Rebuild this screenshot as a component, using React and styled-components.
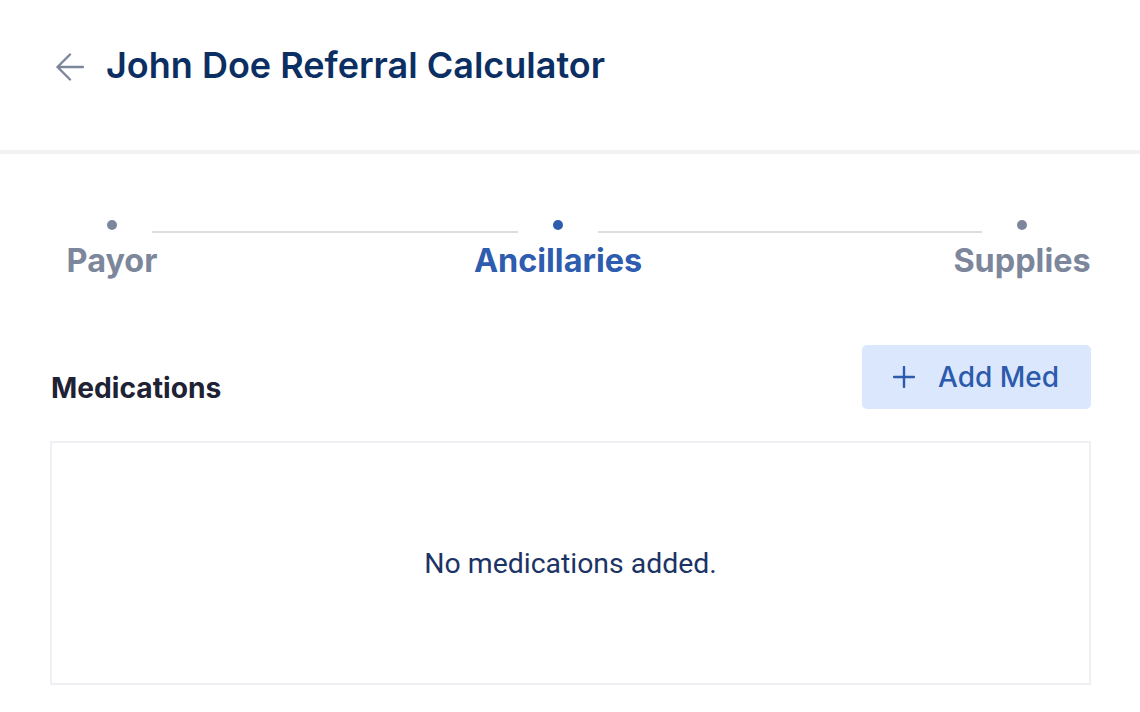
import React from 'react';
import styled, { createGlobalStyle } from 'styled-components';

const GlobalStyle = createGlobalStyle`
	html, body {
		margin: 0;
		padding: 0;
		background: #fff;
		font-family: Inter, "Noto Sans", sans-serif;
	}
	* { box-sizing: border-box; }
`;

const Header = styled.header`
	height: 154px;
	padding: 43px 0 0 56px;
	border-bottom: 4px solid #f2f2f5;
	display: flex;
	align-items: flex-start;
	gap: 22px;
`;

const BackButton = styled.button`
	border: 0;
	background: none;
	padding: 0;
	margin-top: 10px;
	width: 28px;
	height: 28px;
	color: #7d879b;
	cursor: pointer;
	display: flex;
`;

const Title = styled.h1`
	margin: 0;
	font-size: 36px;
	font-weight: 600;
	line-height: 44px;
	color: #0c2f63;
`;

const Main = styled.main`
	padding: 66px 50px 0;
`;

const Track = styled.div`
	display: flex;
	align-items: flex-start;
	padding: 0 63px 0 57px;
`;

const Step = styled.div`
	width: 10px;
	display: flex;
	flex-direction: column;
	align-items: center;
	flex: none;
`;

const Dot = styled.span`
	width: 10px;
	height: 10px;
	border-radius: 50%;
	background: ${p => (p.$active ? '#2e5cae' : '#7d879b')};
`;

const StepLabel = styled.span`
	margin-top: 11px;
	white-space: nowrap;
	font-size: 32.4px;
	font-weight: 700;
	line-height: 39px;
	color: ${p => (p.$active ? '#2e5cae' : '#7d879b')};
`;

const Connector = styled.span`
	flex: ${p => p.$grow} 1 0;
	height: 2px;
	margin: 11px 35px 0;
	background: #dddde0;
`;

const SectionRow = styled.div`
	margin-top: 65px;
	display: flex;
	justify-content: space-between;
	align-items: flex-start;
`;

const SectionTitle = styled.h2`
	margin: 25px 0 0 1px;
	font-size: 28.2px;
	font-weight: 700;
	line-height: 36px;
	color: #1e2234;
`;

const AddButton = styled.button`
	height: 64px;
	width: 229px;
	margin-right: -1px;
	padding: 0 0 0 31px;
	border: 0;
	border-radius: 5px;
	background: #dbe7fd;
	color: #2c5aac;
	display: flex;
	align-items: center;
	gap: 23px;
	font-family: Inter, "Noto Sans", sans-serif;
	font-size: 28px;
	font-weight: 500;
	cursor: pointer;
`;

const EmptyBox = styled.div`
	margin: 32px -1px 0 0;
	height: 244px;
	border: 2px solid #efeff4;
	display: flex;
	align-items: center;
	justify-content: center;
	font-family: Roboto, "Noto Sans", sans-serif;
	font-size: 28.4px;
	color: #1b3365;
`;

const steps = [
	{ label: 'Payor' },
	{ label: 'Ancillaries', active: true },
	{ label: 'Supplies' },
];
const grows = [366, 384];

export default function App() {
	return (
		<>
			<GlobalStyle />
			<Header>
				<BackButton aria-label="Back">
					<svg width="28" height="28" viewBox="0 0 28 28" fill="none" stroke="currentColor" strokeWidth="2.4" strokeLinecap="round" strokeLinejoin="round">
						<path d="M27 14H1.5M14 1.5L1.5 14L14 26.5" />
					</svg>
				</BackButton>
				<Title>John Doe Referral Calculator</Title>
			</Header>
			<Main>
				<Track>
					{steps.map((s, i) => (
						<React.Fragment key={s.label}>
							<Step>
								<Dot $active={s.active} />
								<StepLabel $active={s.active}>{s.label}</StepLabel>
							</Step>
							{i < steps.length - 1 && <Connector $grow={grows[i]} />}
						</React.Fragment>
					))}
				</Track>
				<SectionRow>
					<SectionTitle>Medications</SectionTitle>
					<AddButton>
						<svg width="22" height="22" viewBox="0 0 22 22" fill="none" stroke="currentColor" strokeWidth="2.4" strokeLinecap="round">
							<path d="M11 1v20M1 11h20" />
						</svg>
						Add Med
					</AddButton>
				</SectionRow>
				<EmptyBox>No medications added.</EmptyBox>
			</Main>
		</>
	);
}
